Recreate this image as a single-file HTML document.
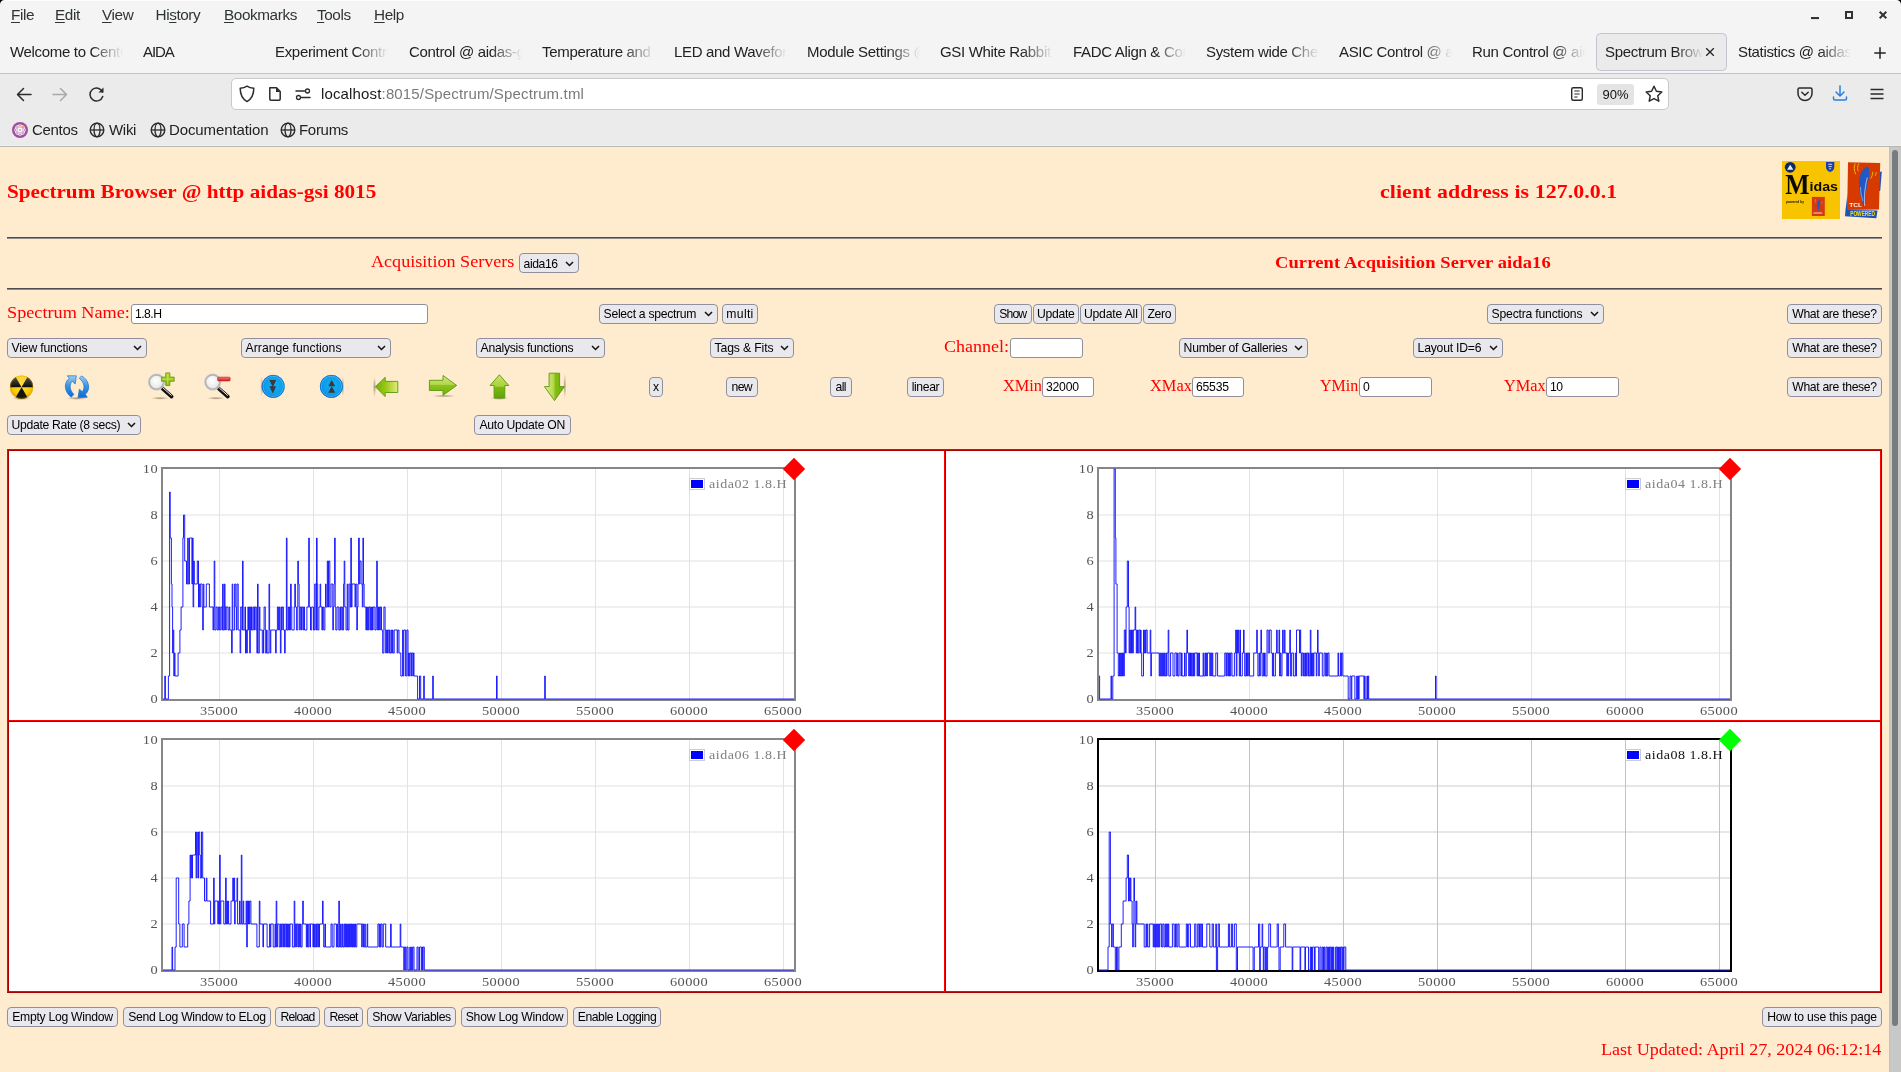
<!DOCTYPE html>
<html><head><meta charset="utf-8"><title>Spectrum Browser</title>
<style>
*{box-sizing:border-box;margin:0;padding:0}
html,body{width:1901px;height:1072px;overflow:hidden;background:#ffebcd;font-family:"Liberation Sans",sans-serif;}
.abs{position:absolute}
#chrome{position:absolute;left:0;top:0;width:1901px;height:146px;background:#f4f4f4;}
#navbar{position:absolute;left:0;top:74px;width:1901px;height:72px;background:#ebebeb;}
#tabsep{position:absolute;left:0;top:73px;width:1901px;height:1px;background:#c4c4c4;}
#chromeend{position:absolute;left:0;top:145px;width:1901px;height:2px;background:linear-gradient(#efefef 0,#efefef 50%,#b6b8b6 50%,#b6b8b6 100%);}
.menu{position:absolute;top:6px;font-size:15.3px;color:#2e3436;white-space:nowrap;line-height:18px;letter-spacing:-0.4px}
.menu u{text-decoration:underline;text-underline-offset:2px}
.tab{position:absolute;top:42px;width:113px;height:20px;font-size:15px;line-height:20px;color:#222;white-space:nowrap;overflow:hidden;letter-spacing:-0.32px;
 -webkit-mask-image:linear-gradient(to right,#000 72%,transparent 100%);mask-image:linear-gradient(to right,#000 72%,transparent 100%);}
#acttab{position:absolute;left:1596px;top:33px;width:130.5px;height:37.5px;background:#ebebeb;border:1px solid #c4c4ce;border-radius:4.5px;}
#urlbar{position:absolute;left:231px;top:78px;width:1438px;height:32px;background:#fff;border:1px solid #c9c9c9;border-radius:5px;}
.bm{position:absolute;top:121px;font-size:15px;line-height:18px;color:#222;white-space:nowrap;letter-spacing:-0.3px}
.ser{font-family:"Liberation Serif",serif;color:#ff0000;white-space:nowrap;position:absolute}
.btn{position:absolute;height:19.7px;background:#e9e9ed;border:1px solid #8f8f9d;border-radius:4px;font-size:12.2px;line-height:17.7px;padding-top:0.9px;color:#000;text-align:center;white-space:nowrap;overflow:hidden}
.sel{position:absolute;height:19.7px;background:#e9e9ed;border:1px solid #8f8f9d;border-radius:4px;font-size:12.2px;line-height:17.7px;color:#000;padding-left:3.6px;padding-top:1.3px;white-space:nowrap;overflow:hidden}
.sel svg{position:absolute;right:3.8px;top:6.3px}
.inp{position:absolute;height:19.7px;background:#fff;border:1px solid #8f8f9d;border-radius:3px;font-size:12.2px;line-height:17.7px;color:#000;padding-left:3px;padding-top:0.5px;white-space:nowrap;overflow:hidden}
.hr{position:absolute;left:7px;width:1875px;height:2px;background:linear-gradient(#4b4d53 0,#4b4d53 50%,#8c8c90 50%,#8c8c90 100%)}
.cell{position:absolute;background:#fff;border:2px solid #d40000}
.tick{position:absolute;font-family:"Liberation Serif",serif;font-size:12px;color:#545454;line-height:12px;white-space:nowrap}
.tx{transform:translateX(-50%)}
.ty{text-align:right;width:30px}
#all{position:absolute;left:0;top:0;width:1901px;height:1072px;will-change:transform}
</style></head><body><div id="all">
<div id="chrome"></div>
<div id="navbar"></div>
<div id="tabsep"></div>
<div id="chromeend"></div>
<!-- menu -->
<div class="menu" style="left:11px"><u>F</u>ile</div>
<div class="menu" style="left:55px"><u>E</u>dit</div>
<div class="menu" style="left:102px"><u>V</u>iew</div>
<div class="menu" style="left:155.5px">Hi<u>s</u>tory</div>
<div class="menu" style="left:224px"><u>B</u>ookmarks</div>
<div class="menu" style="left:317px"><u>T</u>ools</div>
<div class="menu" style="left:374px"><u>H</u>elp</div>
<!-- window controls -->
<svg class="abs" style="left:1800px;top:5px" width="90" height="22" viewBox="0 0 90 22">
 <rect x="11" y="12" width="8" height="2.100" fill="#2e3436"/>
 <rect x="46" y="7" width="6" height="6" fill="none" stroke="#2e3436" stroke-width="2"/>
 <path d="M79.700 6.700 L86.300 13.300 M86.300 6.700 L79.700 13.300" stroke="#2e3436" stroke-width="2" fill="none"/>
</svg>
<svg class="abs" style="left:0;top:0" width="1901" height="8" viewBox="0 0 1901 8">
 <rect x="0" y="0" width="1901" height="1" fill="#fcfcfc"/>
 <path d="M0 0 H4.500 A4.500 4.500 0 0 0 0 4.500 Z" fill="#000"/>
 <path d="M1901 0 H1896.500 A4.500 4.500 0 0 1 1901 4.500 Z" fill="#000"/>
</svg>
<!-- tabs -->
<div id="acttab"></div>
<div class="tab" style="left:10px">Welcome to CentOS</div>
<div class="tab" style="left:143px;letter-spacing:-1.1px">AIDA</div>
<div class="tab" style="left:275px">Experiment Control</div>
<div class="tab" style="left:409px">Control @ aidas-gsi</div>
<div class="tab" style="left:542px">Temperature and st</div>
<div class="tab" style="left:674px">LED and Waveform</div>
<div class="tab" style="left:807px">Module Settings @</div>
<div class="tab" style="left:940px">GSI White Rabbit C</div>
<div class="tab" style="left:1073px">FADC Align &amp; Contr</div>
<div class="tab" style="left:1206px">System wide Checks</div>
<div class="tab" style="left:1339px">ASIC Control @ aid</div>
<div class="tab" style="left:1472px">Run Control @ aida</div>
<div class="tab" style="left:1605px;width:98px">Spectrum Browser</div>
<div class="tab" style="left:1738px">Statistics @ aidas-g</div>
<svg class="abs" style="left:1704px;top:46px" width="12" height="12" viewBox="0 0 12 12"><path d="M2.2 2.2 L9.800 9.800 M9.800 2.200 L2.200 9.800" stroke="#222" stroke-width="1.3" fill="none"/></svg>
<svg class="abs" style="left:1872.300px;top:44.500px" width="16" height="16" viewBox="0 0 16 16"><path d="M8 2.300 V13.700 M2.300 8 H13.700" stroke="#222" stroke-width="1.5" fill="none"/></svg>
<!-- nav buttons -->
<svg class="abs" style="left:14px;top:84px" width="100" height="22" viewBox="0 0 100 22">
 <path d="M17 10.5 H4 M9.5 4.5 L3.5 10.5 L9.5 16.5" stroke="#2b2b2b" stroke-width="1.5" fill="none" stroke-linecap="round" stroke-linejoin="round"/>
 <path d="M39 10.5 H52 M46.500 4.500 L52.5 10.5 L46.5 16.5" stroke="#a9a9a9" stroke-width="1.5" fill="none" stroke-linecap="round" stroke-linejoin="round"/>
 <path d="M88.500 8 A6.500 6.500 0 1 0 88.700 12.500" stroke="#2b2b2b" stroke-width="1.500" fill="none" stroke-linecap="round"/>
 <path d="M89.500 3.500 V8.500 H84.500 Z" fill="#2b2b2b"/>
</svg>
<!-- url bar -->
<div id="urlbar"></div>
<svg class="abs" style="left:238px;top:84px" width="80" height="20" viewBox="0 0 80 20">
 <path d="M9 2.200 C11 3.600 13.500 4.200 15.800 4.300 C15.800 10 14 14.800 9 17.600 C4 14.800 2.200 10 2.200 4.300 C4.500 4.200 7 3.600 9 2.200 Z" stroke="#2b2b2b" stroke-width="1.500" fill="none" stroke-linejoin="round"/>
 <path d="M31.800 3.800 H38.500 L42.200 7.500 V15 Q42.200 16.200 41 16.200 H33 Q31.800 16.200 31.800 15 Z" stroke="#2b2b2b" stroke-width="1.500" fill="none" stroke-linejoin="round"/>
 <path d="M38 3.800 V8 H42.200 Z" fill="#2b2b2b"/>
 <path d="M58 7 H66.500 M63.500 13.500 H72" stroke="#2b2b2b" stroke-width="1.500" fill="none" stroke-linecap="round"/>
 <circle cx="69.500" cy="7" r="2" stroke="#2b2b2b" stroke-width="1.300" fill="none"/>
 <circle cx="60.500" cy="13.500" r="2" stroke="#2b2b2b" stroke-width="1.300" fill="none"/>
</svg>
<div class="abs" style="left:321px;top:84px;font-size:15px;line-height:20px;color:#1a1a1a;white-space:nowrap;letter-spacing:0.15px">localhost<span style="color:#7a7a7a">:8015/Spectrum/Spectrum.tml</span></div>
<!-- reader, zoom, star -->
<svg class="abs" style="left:1569px;top:86px" width="16" height="16" viewBox="0 0 16 16">
 <rect x="2.700" y="1.700" width="10.600" height="12.600" rx="1.500" stroke="#2b2b2b" stroke-width="1.400" fill="none"/>
 <path d="M5.300 5 H10.700 M5.300 8 H10.700 M5.300 11 H8.500" stroke="#2b2b2b" stroke-width="1.200" fill="none"/>
</svg>
<div class="abs" style="left:1597px;top:84px;width:37px;height:21px;background:#e4e4e4;border-radius:3px;font-size:13px;line-height:21px;text-align:center;color:#111">90%</div>
<svg class="abs" style="left:1644px;top:84px" width="20" height="20" viewBox="0 0 20 20">
 <path d="M10 2.300 L12.400 7.300 L17.800 8 L13.800 11.800 L14.800 17.200 L10 14.600 L5.200 17.200 L6.200 11.800 L2.200 8 L7.600 7.300 Z" stroke="#2b2b2b" stroke-width="1.500" fill="none" stroke-linejoin="round"/>
</svg>
<!-- pocket, download, hamburger -->
<svg class="abs" style="left:1796px;top:85px" width="18" height="18" viewBox="0 0 18 18">
 <path d="M3.500 3 H14.500 Q16 3 16 4.500 V8.500 A7 7 0 0 1 2 8.500 V4.500 Q2 3 3.500 3 Z" stroke="#2b2b2b" stroke-width="1.500" fill="none"/>
 <path d="M5.800 7.300 L9 10.300 L12.200 7.300" stroke="#2b2b2b" stroke-width="1.500" fill="none" stroke-linecap="round" stroke-linejoin="round"/>
</svg>
<svg class="abs" style="left:1831px;top:84px" width="18" height="20" viewBox="0 0 18 20">
 <path d="M9 2 V11.500 M5 8 L9 12 L13 8" stroke="#2a7fe0" stroke-width="1.500" fill="none" stroke-linecap="round" stroke-linejoin="round"/>
 <path d="M2.500 13 V14.500 Q2.500 16 4 16 H14 Q15.500 16 15.500 14.500 V13" stroke="#2a7fe0" stroke-width="1.500" fill="none" stroke-linecap="round"/>
</svg>
<svg class="abs" style="left:1869px;top:86px" width="16" height="16" viewBox="0 0 16 16">
 <path d="M1.500 3.500 H14.500 M1.500 8 H14.500 M1.500 12.500 H14.500" stroke="#2b2b2b" stroke-width="1.500" fill="none"/>
</svg>
<!-- bookmarks -->
<svg class="abs" style="left:11px;top:121px" width="18" height="18" viewBox="0 0 18 18">
 <circle cx="9" cy="9" r="8" fill="#a14f9d"/>
 <g stroke="#fff" stroke-width="0.900" fill="none">
  <circle cx="9" cy="5.800" r="2.100"/><circle cx="9" cy="12.200" r="2.100"/><circle cx="5.800" cy="9" r="2.100"/><circle cx="12.200" cy="9" r="2.100"/>
  <circle cx="6.700" cy="6.700" r="2.100"/><circle cx="11.300" cy="6.700" r="2.100"/><circle cx="6.700" cy="11.300" r="2.100"/><circle cx="11.300" cy="11.300" r="2.100"/>
 </g>
 <circle cx="11.800" cy="6.200" r="1.100" fill="#f6a623"/>
</svg>
<div class="bm" style="left:32px">Centos</div>
<div class="bm" style="left:109px">Wiki</div>
<div class="bm" style="left:169px;letter-spacing:-0.1px">Documentation</div>
<div class="bm" style="left:299px">Forums</div>
<svg width="0" height="0" style="position:absolute"><defs>
 <g id="globe"><circle cx="8" cy="8" r="6.800" stroke="#2b2b2b" stroke-width="1.400" fill="none"/><ellipse cx="8" cy="8" rx="3" ry="6.800" stroke="#2b2b2b" stroke-width="1.300" fill="none"/><path d="M1.200 8 H14.800" stroke="#2b2b2b" stroke-width="1.300"/></g>
</defs></svg>
<svg class="abs" style="left:89px;top:122px" width="16" height="16"><use href="#globe"/></svg>
<svg class="abs" style="left:149.500px;top:122px" width="16" height="16"><use href="#globe"/></svg>
<svg class="abs" style="left:279.500px;top:122px" width="16" height="16"><use href="#globe"/></svg>
<div class="ser" style="left:6.7px;top:179.42px;font-size:19.5px;line-height:25px;letter-spacing:0.000px;transform-origin:0 50%;transform:scaleX(1.0871);font-weight:bold;">Spectrum Browser @ http aidas-gsi 8015</div>
<div class="ser" style="left:1379.7px;top:179.22px;font-size:19.5px;line-height:25px;letter-spacing:0.079px;transform-origin:0 50%;transform:scaleX(1.1200);font-weight:bold;">client address is 127.0.0.1</div>
<div class="hr" style="top:237px"></div>
<div class="ser" style="left:371.1px;top:250.66px;font-size:17px;line-height:22px;letter-spacing:0.000px;transform-origin:0 50%;transform:scaleX(1.0657);">Acquisition Servers</div>
<div class="sel" style="left:519px;top:253.3px;width:60px;letter-spacing:-0.427px;">aida16<svg width="9" height="6" viewBox="0 0 9 6"><path d="M1 1 L4.5 4.5 L8 1" stroke="#111" stroke-width="1.5" fill="none"/></svg></div>
<div class="ser" style="left:1274.7px;top:251.93px;font-size:16.5px;line-height:21px;letter-spacing:0.106px;transform-origin:0 50%;transform:scaleX(1.1200);font-weight:bold;">Current Acquisition Server aida16</div>
<div class="hr" style="top:288px"></div>
<div class="ser" style="left:6.6px;top:301.76px;font-size:17px;line-height:22px;letter-spacing:0.000px;transform-origin:0 50%;transform:scaleX(1.0713);">Spectrum Name:</div>
<div class="inp" style="left:131px;top:304px;width:297px;letter-spacing:-0.540px;">1.8.H</div>
<div class="sel" style="left:599px;top:304px;width:119px;letter-spacing:-0.290px;">Select a spectrum<svg width="9" height="6" viewBox="0 0 9 6"><path d="M1 1 L4.5 4.5 L8 1" stroke="#111" stroke-width="1.5" fill="none"/></svg></div>
<div class="btn" style="left:722px;top:304px;width:36px;letter-spacing:0.310px;">multi</div>
<div class="btn" style="left:994px;top:304px;width:37.5px;letter-spacing:-0.839px;">Show</div>
<div class="btn" style="left:1032.5px;top:304px;width:46.5px;letter-spacing:-0.268px;">Update</div>
<div class="btn" style="left:1079.6px;top:304px;width:62.40000000000009px;letter-spacing:-0.179px;">Update All</div>
<div class="btn" style="left:1142.7px;top:304px;width:33.299999999999955px;letter-spacing:-0.362px;">Zero</div>
<div class="sel" style="left:1487px;top:304px;width:117px;letter-spacing:-0.204px;">Spectra functions<svg width="9" height="6" viewBox="0 0 9 6"><path d="M1 1 L4.5 4.5 L8 1" stroke="#111" stroke-width="1.5" fill="none"/></svg></div>
<div class="btn" style="left:1787px;top:304px;width:95px;letter-spacing:-0.323px;">What are these?</div>
<div class="sel" style="left:7px;top:338px;width:140px;letter-spacing:-0.188px;">View functions<svg width="9" height="6" viewBox="0 0 9 6"><path d="M1 1 L4.5 4.5 L8 1" stroke="#111" stroke-width="1.5" fill="none"/></svg></div>
<div class="sel" style="left:241px;top:338px;width:149.5px;letter-spacing:0.024px;">Arrange functions<svg width="9" height="6" viewBox="0 0 9 6"><path d="M1 1 L4.5 4.5 L8 1" stroke="#111" stroke-width="1.5" fill="none"/></svg></div>
<div class="sel" style="left:476px;top:338px;width:129px;letter-spacing:-0.273px;">Analysis functions<svg width="9" height="6" viewBox="0 0 9 6"><path d="M1 1 L4.5 4.5 L8 1" stroke="#111" stroke-width="1.5" fill="none"/></svg></div>
<div class="sel" style="left:710px;top:338px;width:84px;letter-spacing:-0.134px;">Tags &amp; Fits<svg width="9" height="6" viewBox="0 0 9 6"><path d="M1 1 L4.5 4.5 L8 1" stroke="#111" stroke-width="1.5" fill="none"/></svg></div>
<div class="ser" style="left:943.9px;top:335.76px;font-size:17px;line-height:22px;letter-spacing:0.000px;transform-origin:0 50%;transform:scaleX(1.0607);">Channel:</div>
<div class="inp" style="left:1010px;top:338px;width:73px;"></div>
<div class="sel" style="left:1179px;top:338px;width:129px;letter-spacing:-0.249px;">Number of Galleries<svg width="9" height="6" viewBox="0 0 9 6"><path d="M1 1 L4.5 4.5 L8 1" stroke="#111" stroke-width="1.5" fill="none"/></svg></div>
<div class="sel" style="left:1413px;top:338px;width:90px;letter-spacing:-0.213px;">Layout ID=6<svg width="9" height="6" viewBox="0 0 9 6"><path d="M1 1 L4.5 4.5 L8 1" stroke="#111" stroke-width="1.5" fill="none"/></svg></div>
<div class="btn" style="left:1787px;top:338px;width:95px;letter-spacing:-0.323px;">What are these?</div>
<div class="btn" style="left:649px;top:377px;width:14px;">x</div>
<div class="btn" style="left:726px;top:377px;width:31.5px;letter-spacing:-0.690px;">new</div>
<div class="btn" style="left:830px;top:377px;width:21.5px;letter-spacing:-0.603px;">all</div>
<div class="btn" style="left:907px;top:377px;width:37px;letter-spacing:-0.368px;">linear</div>
<div class="ser" style="left:1002.6px;top:374.56px;font-size:17px;line-height:22px;letter-spacing:0.000px;transform-origin:0 50%;transform:scaleX(0.9602);">XMin</div>
<div class="inp" style="left:1042px;top:377px;width:52px;letter-spacing:-0.231px;">32000</div>
<div class="ser" style="left:1149.9px;top:374.56px;font-size:17px;line-height:22px;letter-spacing:0.000px;transform-origin:0 50%;transform:scaleX(0.9646);">XMax</div>
<div class="inp" style="left:1192px;top:377px;width:52px;letter-spacing:-0.231px;">65535</div>
<div class="ser" style="left:1320.1px;top:374.56px;font-size:17px;line-height:22px;letter-spacing:0.000px;transform-origin:0 50%;transform:scaleX(0.9381);">YMin</div>
<div class="inp" style="left:1359px;top:377px;width:73px;">0</div>
<div class="ser" style="left:1504.1px;top:374.56px;font-size:17px;line-height:22px;letter-spacing:0.000px;transform-origin:0 50%;transform:scaleX(0.9577);">YMax</div>
<div class="inp" style="left:1546px;top:377px;width:73px;letter-spacing:-0.570px;">10</div>
<div class="btn" style="left:1787px;top:377px;width:95px;letter-spacing:-0.323px;">What are these?</div>
<div class="sel" style="left:7px;top:415px;width:134px;letter-spacing:-0.330px;">Update Rate (8 secs)<svg width="9" height="6" viewBox="0 0 9 6"><path d="M1 1 L4.5 4.5 L8 1" stroke="#111" stroke-width="1.5" fill="none"/></svg></div>
<div class="btn" style="left:474px;top:415px;width:96.5px;letter-spacing:-0.271px;">Auto Update ON</div>
<div class="btn" style="left:7px;top:1007px;width:111px;letter-spacing:-0.273px;">Empty Log Window</div>
<div class="btn" style="left:123px;top:1007px;width:148px;letter-spacing:-0.294px;">Send Log Window to ELog</div>
<div class="btn" style="left:275px;top:1007px;width:45px;letter-spacing:-0.732px;">Reload</div>
<div class="btn" style="left:324px;top:1007px;width:39px;letter-spacing:-0.718px;">Reset</div>
<div class="btn" style="left:367px;top:1007px;width:89px;letter-spacing:-0.374px;">Show Variables</div>
<div class="btn" style="left:461px;top:1007px;width:107px;letter-spacing:-0.217px;">Show Log Window</div>
<div class="btn" style="left:573px;top:1007px;width:88px;letter-spacing:-0.446px;">Enable Logging</div>
<div class="btn" style="left:1762px;top:1007px;width:120px;letter-spacing:-0.207px;">How to use this page</div>
<div class="ser" style="left:1601.1px;top:1039.36px;font-size:17px;line-height:22px;letter-spacing:0.000px;transform-origin:0 50%;transform:scaleX(1.0639);">Last Updated: April 27, 2024 06:12:14</div>
<div class="abs" style="left:1889px;top:147px;width:12px;height:925px;background:#c7c9c9;border-left:1px solid #bfc1c3"></div>
<div class="abs" style="left:1892px;top:150px;width:6px;height:876px;background:#787c7e;border-radius:3px"></div>
<div class="abs" style="left:7px;top:449px;width:1875px;height:544px;background:#fff;border:1px solid;border-color:#ff0000 #aa0000 #aa0000 #ff0000"></div>
<div class="abs" style="left:8px;top:450px;width:937px;height:271px;border:1px solid;border-color:#aa0000 #ff0000 #ff0000 #aa0000"></div>
<div class="abs" style="left:945px;top:450px;width:936px;height:271px;border:1px solid;border-color:#aa0000 #ff0000 #ff0000 #aa0000"></div>
<div class="abs" style="left:8px;top:721px;width:937px;height:271px;border:1px solid;border-color:#aa0000 #ff0000 #ff0000 #aa0000"></div>
<div class="abs" style="left:945px;top:721px;width:936px;height:271px;border:1px solid;border-color:#aa0000 #ff0000 #ff0000 #aa0000"></div>
<svg class="abs" style="left:0;top:0" width="1901" height="1072" viewBox="0 0 1901 1072">
<g transform="translate(0,0)">
<path d="M163.0 653H794.0M163.0 607H794.0M163.0 561H794.0M163.0 515H794.0" stroke="#f0f0f0" stroke-width="2" fill="none"/>
<path d="M219.5 469.0V699.0M313.5 469.0V699.0M407.5 469.0V699.0M501.5 469.0V699.0M595.5 469.0V699.0M689.5 469.0V699.0M783.5 469.0V699.0" stroke="#e3e3e3" stroke-width="1" fill="none"/>
<rect x="162.0" y="468.0" width="633.0" height="232.0" fill="none" stroke="#868686" stroke-width="2"/>
<path d="M163.0 699.0H164.8V676.0H165.4V699.0H168.4V676.0H169.6V492.0H170.2V538.0H171.4V584.0H172.0V607.0H172.6V653.0H173.2V630.0H173.8V676.0H174.4V653.0H175.0V676.0H178.1V653.0H179.9V630.0H181.1V607.0H182.9V538.0H183.5V515.0H184.7V561.0H186.5V584.0H187.7V538.0H188.3V584.0H189.5V538.0H191.9V584.0H192.5V538.0H193.1V607.0H193.7V561.0H194.3V584.0H197.3V561.0H198.5V607.0H199.1V584.0H199.7V607.0H200.3V584.0H202.1V607.0H202.7V630.0H203.3V584.0H203.9V607.0H206.3V584.0H209.4V607.0H213.0V630.0H213.6V607.0H214.2V561.0H214.8V630.0H216.0V607.0H217.2V630.0H218.4V607.0H219.6V630.0H220.8V607.0H222.0V630.0H222.6V584.0H223.2V630.0H224.4V584.0H225.0V607.0H225.6V630.0H226.2V607.0H228.0V630.0H229.2V607.0H229.8V630.0H231.6V653.0H232.2V584.0H232.8V630.0H234.6V584.0H235.8V607.0H236.4V630.0H237.0V584.0H238.2V630.0H240.1V653.0H240.7V607.0H241.9V630.0H242.5V561.0H243.1V630.0H244.9V607.0H245.5V653.0H246.1V630.0H246.7V653.0H247.3V630.0H247.9V607.0H248.5V630.0H249.1V607.0H249.7V653.0H250.3V607.0H250.9V630.0H251.5V607.0H252.1V630.0H253.3V607.0H254.5V630.0H255.1V607.0H256.3V630.0H256.9V653.0H257.5V584.0H258.1V653.0H259.3V607.0H259.9V630.0H262.3V653.0H263.5V630.0H264.1V607.0H265.3V653.0H266.5V630.0H267.1V653.0H269.0V584.0H269.6V630.0H270.2V653.0H270.8V630.0H275.6V653.0H276.2V630.0H277.4V607.0H278.6V630.0H279.2V607.0H279.8V630.0H280.4V653.0H281.0V607.0H281.6V630.0H282.2V607.0H283.4V630.0H284.6V653.0H285.2V630.0H286.4V538.0H287.0V630.0H288.2V607.0H288.8V630.0H289.4V607.0H290.0V630.0H290.6V584.0H291.2V607.0H291.8V630.0H294.2V607.0H294.8V584.0H295.4V607.0H296.6V630.0H297.8V561.0H298.4V584.0H299.1V607.0H299.7V630.0H300.3V607.0H301.5V630.0H302.1V607.0H303.3V630.0H303.9V607.0H304.5V630.0H306.9V607.0H308.7V538.0H309.3V607.0H310.5V630.0H311.7V607.0H313.5V630.0H314.7V584.0H315.9V630.0H316.5V538.0H317.1V584.0H317.7V630.0H318.9V607.0H320.1V584.0H320.7V607.0H321.9V630.0H322.5V607.0H323.7V630.0H324.9V607.0H325.5V584.0H326.1V607.0H327.3V561.0H327.9V607.0H328.5V561.0H329.8V607.0H331.0V584.0H332.8V630.0H333.4V607.0H334.0V584.0H334.6V538.0H335.2V607.0H335.8V630.0H337.0V607.0H338.8V630.0H340.0V607.0H340.6V630.0H341.2V607.0H342.4V630.0H343.6V584.0H344.2V561.0H344.8V607.0H346.0V630.0H347.2V584.0H347.8V630.0H349.0V584.0H350.2V607.0H350.8V538.0H351.4V607.0H352.0V584.0H355.0V607.0H355.6V584.0H356.8V630.0H357.4V607.0H358.0V584.0H358.6V538.0H359.3V584.0H359.9V561.0H361.1V584.0H362.3V607.0H362.9V538.0H363.5V584.0H364.1V607.0H365.9V630.0H366.5V607.0H367.1V630.0H367.7V607.0H368.3V630.0H368.9V607.0H370.1V630.0H370.7V607.0H371.3V630.0H371.9V607.0H372.5V630.0H373.1V607.0H374.9V630.0H376.1V607.0H376.7V561.0H377.3V630.0H377.9V607.0H378.5V630.0H379.1V607.0H379.7V630.0H380.3V607.0H381.5V630.0H382.7V653.0H383.9V607.0H385.1V630.0H385.7V653.0H386.3V630.0H386.9V653.0H387.5V630.0H388.8V653.0H389.4V630.0H390.0V653.0H391.2V630.0H391.8V653.0H392.4V630.0H393.0V653.0H394.2V630.0H397.2V653.0H397.8V630.0H399.0V653.0H400.8V676.0H402.6V630.0H403.2V676.0H403.8V630.0H405.6V676.0H406.8V630.0H408.0V676.0H408.6V653.0H409.2V676.0H409.8V653.0H411.0V676.0H411.6V653.0H412.8V676.0H413.4V653.0H414.0V676.0H417.6V699.0H419.5V676.0H420.7V699.0H423.7V676.0H424.3V699.0H432.7V676.0H433.3V699.0H496.5V676.0H497.1V699.0H544.7V676.0H545.3V699.0H794.0" stroke="#1a1aff" stroke-width="0.98" fill="none" stroke-linejoin="miter" shape-rendering="auto"/>
<path d="M794.0 457.8 L805.2 469.0 L794.0 480.2 L782.8 469.0 Z" fill="#ff0000"/>
<rect x="689.5" y="478.500" width="15" height="11" fill="#fff" stroke="#ccc" stroke-width="1"/>
<rect x="691" y="480" width="12" height="8" fill="#0000ff"/>
</g>
<g transform="translate(936,0)">
<path d="M163.0 653H794.0M163.0 607H794.0M163.0 561H794.0M163.0 515H794.0" stroke="#f0f0f0" stroke-width="2" fill="none"/>
<path d="M219.5 469.0V699.0M313.5 469.0V699.0M407.5 469.0V699.0M501.5 469.0V699.0M595.5 469.0V699.0M689.5 469.0V699.0M783.5 469.0V699.0" stroke="#e3e3e3" stroke-width="1" fill="none"/>
<rect x="162.0" y="468.0" width="633.0" height="232.0" fill="none" stroke="#868686" stroke-width="2"/>
<path d="M163.0 676.0H163.6V699.0H175.0V676.0H175.6V699.0H176.8V676.0H178.1V469.0H179.3V538.0H179.9V584.0H181.1V653.0H182.3V676.0H183.5V653.0H184.1V676.0H184.7V653.0H185.3V676.0H185.9V653.0H186.5V676.0H187.1V653.0H187.7V676.0H188.3V630.0H189.5V653.0H190.1V607.0H191.3V561.0H192.5V607.0H193.1V653.0H193.7V630.0H194.3V653.0H194.9V630.0H195.5V653.0H196.1V630.0H196.7V653.0H197.3V630.0H199.1V607.0H199.7V630.0H200.3V653.0H200.9V630.0H201.5V653.0H202.7V630.0H203.9V653.0H204.5V630.0H205.1V653.0H205.7V676.0H207.5V630.0H208.2V653.0H208.8V630.0H209.4V653.0H210.0V630.0H211.2V653.0H214.2V630.0H214.8V676.0H215.4V653.0H223.2V676.0H223.8V653.0H224.4V676.0H225.6V653.0H226.2V676.0H226.8V653.0H227.4V676.0H228.0V653.0H228.6V676.0H229.8V653.0H230.4V676.0H231.0V653.0H232.2V630.0H232.8V676.0H234.6V653.0H237.0V676.0H238.9V653.0H240.7V676.0H241.3V653.0H241.9V676.0H243.1V653.0H244.9V676.0H245.5V653.0H246.1V676.0H248.5V653.0H249.1V676.0H250.3V653.0H250.9V630.0H251.5V653.0H252.7V676.0H253.3V653.0H253.9V676.0H254.5V653.0H255.1V676.0H255.7V653.0H256.3V676.0H257.5V653.0H258.1V676.0H258.7V653.0H261.1V676.0H261.7V653.0H262.3V676.0H262.9V653.0H263.5V676.0H267.1V653.0H267.7V676.0H269.0V653.0H269.6V676.0H270.2V653.0H270.8V676.0H271.4V653.0H273.8V676.0H274.4V653.0H275.6V676.0H276.2V653.0H276.8V676.0H279.8V653.0H281.6V676.0H288.8V653.0H290.0V676.0H290.6V653.0H291.8V676.0H292.4V653.0H293.0V676.0H293.6V653.0H294.2V676.0H294.8V653.0H296.0V676.0H298.4V653.0H299.7V630.0H300.3V676.0H300.9V630.0H301.5V653.0H302.1V630.0H302.7V653.0H303.3V676.0H303.9V630.0H304.5V676.0H306.3V653.0H307.5V630.0H308.1V653.0H308.7V676.0H309.9V653.0H310.5V676.0H311.1V653.0H311.7V676.0H312.3V653.0H313.5V676.0H317.7V653.0H320.7V630.0H321.3V653.0H321.9V676.0H323.1V653.0H323.7V676.0H324.3V653.0H324.9V630.0H325.5V653.0H326.1V676.0H327.3V653.0H327.9V676.0H328.5V653.0H329.2V676.0H331.0V630.0H332.2V653.0H333.4V630.0H335.2V653.0H336.4V676.0H337.0V653.0H337.6V676.0H339.4V653.0H340.6V630.0H341.2V653.0H343.0V630.0H343.6V676.0H344.2V653.0H344.8V676.0H346.0V653.0H346.6V630.0H347.2V653.0H348.4V630.0H349.0V653.0H350.8V676.0H351.4V653.0H352.0V676.0H352.6V653.0H353.8V630.0H354.4V676.0H355.6V653.0H357.4V676.0H359.3V653.0H359.9V676.0H360.5V630.0H363.5V653.0H364.1V630.0H364.7V653.0H365.3V676.0H365.9V653.0H367.1V676.0H367.7V653.0H368.3V676.0H369.5V653.0H370.1V676.0H370.7V653.0H371.9V676.0H372.5V653.0H373.1V676.0H374.3V630.0H374.9V676.0H375.5V653.0H376.1V676.0H376.7V653.0H377.3V676.0H377.9V653.0H380.3V676.0H380.9V653.0H381.5V630.0H382.1V653.0H382.7V676.0H383.3V653.0H386.3V676.0H388.1V653.0H389.4V676.0H390.6V653.0H391.2V676.0H391.8V653.0H393.0V676.0H402.0V653.0H402.6V676.0H404.4V653.0H405.0V676.0H405.6V653.0H406.8V676.0H412.2V699.0H414.0V676.0H415.2V699.0H415.8V676.0H418.9V699.0H420.7V676.0H421.3V699.0H421.9V676.0H422.5V699.0H423.1V676.0H427.9V699.0H428.5V676.0H429.1V699.0H430.9V676.0H431.5V699.0H432.1V676.0H432.7V699.0H499.5V676.0H500.1V699.0H794.0" stroke="#1a1aff" stroke-width="0.98" fill="none" stroke-linejoin="miter" shape-rendering="auto"/>
<path d="M794.0 457.8 L805.2 469.0 L794.0 480.2 L782.8 469.0 Z" fill="#ff0000"/>
<rect x="689.5" y="478.500" width="15" height="11" fill="#fff" stroke="#ccc" stroke-width="1"/>
<rect x="691" y="480" width="12" height="8" fill="#0000ff"/>
</g>
<g transform="translate(0,271)">
<path d="M163.0 653H794.0M163.0 607H794.0M163.0 561H794.0M163.0 515H794.0" stroke="#f0f0f0" stroke-width="2" fill="none"/>
<path d="M219.5 469.0V699.0M313.5 469.0V699.0M407.5 469.0V699.0M501.5 469.0V699.0M595.5 469.0V699.0M689.5 469.0V699.0M783.5 469.0V699.0" stroke="#e3e3e3" stroke-width="1" fill="none"/>
<rect x="162.0" y="468.0" width="633.0" height="232.0" fill="none" stroke="#868686" stroke-width="2"/>
<path d="M163.0 699.0H172.0V676.0H172.6V699.0H175.0V676.0H176.2V607.0H178.7V653.0H179.9V676.0H182.3V653.0H184.1V676.0H187.7V653.0H188.9V630.0H190.1V584.0H190.7V607.0H191.3V584.0H191.9V607.0H192.5V584.0H195.5V561.0H196.1V607.0H196.7V561.0H197.3V584.0H197.9V607.0H198.5V561.0H199.7V584.0H200.3V607.0H201.5V561.0H202.7V607.0H204.5V630.0H206.3V607.0H206.9V630.0H210.6V653.0H213.6V607.0H214.2V653.0H214.8V630.0H217.8V653.0H218.4V630.0H219.0V653.0H219.6V584.0H220.2V653.0H220.8V630.0H223.8V653.0H225.6V607.0H226.2V653.0H226.8V630.0H227.4V653.0H228.0V630.0H228.6V653.0H231.0V630.0H232.8V607.0H233.4V630.0H234.0V607.0H234.6V653.0H235.2V630.0H237.0V607.0H237.6V653.0H239.5V630.0H240.1V653.0H241.3V584.0H241.9V653.0H243.1V630.0H243.7V653.0H246.1V630.0H246.7V676.0H247.3V630.0H247.9V653.0H248.5V630.0H249.1V653.0H249.7V630.0H250.9V653.0H256.9V676.0H259.3V630.0H259.9V653.0H262.9V676.0H263.5V653.0H267.1V676.0H269.6V653.0H270.2V676.0H270.8V653.0H273.2V676.0H275.0V653.0H275.6V676.0H276.2V630.0H276.8V676.0H277.4V653.0H279.2V676.0H280.4V653.0H281.0V676.0H281.6V653.0H282.8V676.0H283.4V653.0H284.0V676.0H284.6V653.0H285.8V676.0H286.4V653.0H287.0V676.0H287.6V653.0H288.2V676.0H288.8V653.0H289.4V676.0H290.0V653.0H292.4V676.0H294.2V630.0H294.8V676.0H295.4V653.0H296.6V676.0H297.2V653.0H298.4V676.0H299.1V653.0H299.7V676.0H300.3V653.0H300.9V676.0H302.1V653.0H302.7V630.0H303.3V653.0H306.3V676.0H306.9V653.0H307.5V676.0H308.7V653.0H309.9V676.0H310.5V653.0H312.9V676.0H313.5V653.0H314.1V676.0H314.7V653.0H315.3V676.0H316.5V653.0H317.7V676.0H318.3V653.0H318.9V676.0H319.5V653.0H322.5V630.0H323.1V653.0H323.7V676.0H324.9V653.0H325.5V676.0H331.0V653.0H332.2V676.0H334.0V653.0H336.4V676.0H337.0V653.0H337.6V676.0H338.8V630.0H339.4V676.0H340.6V653.0H341.2V676.0H342.4V653.0H343.0V676.0H344.2V653.0H344.8V676.0H345.4V653.0H346.0V676.0H346.6V653.0H347.2V676.0H347.8V653.0H348.4V676.0H349.0V653.0H349.6V676.0H350.2V653.0H350.8V676.0H351.4V653.0H352.0V676.0H352.6V653.0H353.2V676.0H353.8V653.0H354.4V676.0H355.0V653.0H355.6V676.0H356.8V653.0H361.7V676.0H362.3V653.0H363.5V676.0H364.7V653.0H365.3V676.0H367.1V653.0H367.7V676.0H377.9V653.0H379.1V676.0H379.7V653.0H380.3V676.0H380.9V653.0H382.1V676.0H383.3V653.0H385.7V676.0H390.6V653.0H391.2V676.0H400.2V653.0H400.8V676.0H403.8V699.0H404.4V676.0H405.6V699.0H406.8V676.0H408.0V699.0H409.8V676.0H410.4V699.0H411.6V676.0H412.2V699.0H412.8V676.0H414.0V699.0H417.0V676.0H418.2V699.0H419.5V676.0H421.3V699.0H421.9V676.0H422.5V699.0H423.1V676.0H424.3V699.0H794.0" stroke="#1a1aff" stroke-width="0.98" fill="none" stroke-linejoin="miter" shape-rendering="auto"/>
<path d="M794.0 457.8 L805.2 469.0 L794.0 480.2 L782.8 469.0 Z" fill="#ff0000"/>
<rect x="689.5" y="478.500" width="15" height="11" fill="#fff" stroke="#ccc" stroke-width="1"/>
<rect x="691" y="480" width="12" height="8" fill="#0000ff"/>
</g>
<g transform="translate(936,271)">
<path d="M163.0 653H794.0M163.0 607H794.0M163.0 561H794.0M163.0 515H794.0" stroke="#e6e6e6" stroke-width="2" fill="none"/>
<path d="M219.5 469.0V699.0M313.5 469.0V699.0M407.5 469.0V699.0M501.5 469.0V699.0M595.5 469.0V699.0M689.5 469.0V699.0M783.5 469.0V699.0" stroke="#c3c3c3" stroke-width="1" fill="none"/>
<rect x="162.0" y="468.0" width="633.0" height="232.0" fill="none" stroke="#000" stroke-width="2"/>
<path d="M163.0 699.0H172.0V676.0H173.2V561.0H174.4V653.0H175.6V676.0H176.2V653.0H177.4V676.0H179.3V699.0H180.5V676.0H181.7V699.0H182.9V676.0H185.3V653.0H187.1V630.0H190.1V607.0H191.3V584.0H192.5V630.0H193.1V607.0H193.7V630.0H194.3V607.0H194.9V630.0H196.1V653.0H196.7V676.0H197.3V653.0H197.9V607.0H198.5V630.0H199.1V676.0H199.7V653.0H200.3V630.0H200.9V653.0H208.2V676.0H210.0V653.0H210.6V676.0H211.2V653.0H211.8V676.0H213.6V653.0H217.2V676.0H217.8V653.0H218.4V676.0H219.6V653.0H220.2V676.0H220.8V653.0H221.4V676.0H222.6V653.0H223.2V676.0H223.8V653.0H225.6V676.0H226.8V653.0H228.0V676.0H229.2V653.0H229.8V676.0H230.4V653.0H231.6V676.0H232.2V653.0H232.8V676.0H236.4V653.0H238.2V676.0H239.5V653.0H240.7V676.0H241.9V653.0H243.1V676.0H250.3V653.0H251.5V676.0H252.7V653.0H254.5V676.0H258.7V653.0H259.9V676.0H261.7V653.0H262.9V676.0H263.5V653.0H264.7V676.0H265.3V653.0H266.5V676.0H270.8V653.0H273.8V676.0H276.2V653.0H277.4V676.0H279.8V653.0H280.4V699.0H281.6V676.0H282.2V653.0H283.4V676.0H292.4V653.0H293.6V676.0H295.4V653.0H296.6V676.0H298.4V653.0H300.3V699.0H301.5V676.0H317.1V699.0H318.3V676.0H322.5V653.0H323.7V699.0H324.3V676.0H326.1V653.0H326.7V676.0H327.3V699.0H327.9V676.0H329.2V699.0H329.8V676.0H330.4V699.0H331.6V676.0H332.8V653.0H334.6V676.0H341.2V653.0H342.4V676.0H343.0V699.0H344.2V676.0H347.8V653.0H349.6V676.0H356.2V699.0H356.8V676.0H364.1V699.0H364.7V676.0H368.9V699.0H369.5V676.0H372.5V699.0H374.3V676.0H374.9V699.0H375.5V676.0H376.1V699.0H376.7V676.0H378.5V699.0H379.1V676.0H382.7V699.0H383.9V676.0H385.1V699.0H386.3V676.0H387.5V699.0H388.1V676.0H388.8V699.0H390.0V676.0H391.2V699.0H391.8V676.0H392.4V699.0H393.0V676.0H393.6V699.0H394.2V676.0H395.4V699.0H396.0V676.0H396.6V699.0H397.2V676.0H397.8V699.0H399.6V676.0H400.8V699.0H401.4V676.0H402.0V699.0H402.6V676.0H403.2V699.0H403.8V676.0H404.4V699.0H405.0V676.0H406.2V699.0H406.8V676.0H407.4V699.0H408.0V676.0H409.8V699.0H794.0" stroke="#1a1aff" stroke-width="0.98" fill="none" stroke-linejoin="miter" shape-rendering="auto"/>
<path d="M794.0 457.8 L805.2 469.0 L794.0 480.2 L782.8 469.0 Z" fill="#00ff00"/>
<rect x="689.5" y="478.500" width="15" height="11" fill="#fff" stroke="#ccc" stroke-width="1"/>
<rect x="691" y="480" width="12" height="8" fill="#0000ff"/>
</g>
</svg>
<div class="tick" style="left:218.9px;top:705px;letter-spacing:0.35px;transform:translateX(-50%) scaleX(1.2)">35000</div>
<div class="tick" style="left:313.0px;top:705px;letter-spacing:0.35px;transform:translateX(-50%) scaleX(1.2)">40000</div>
<div class="tick" style="left:407.1px;top:705px;letter-spacing:0.35px;transform:translateX(-50%) scaleX(1.2)">45000</div>
<div class="tick" style="left:501.2px;top:705px;letter-spacing:0.35px;transform:translateX(-50%) scaleX(1.2)">50000</div>
<div class="tick" style="left:595.3px;top:705px;letter-spacing:0.35px;transform:translateX(-50%) scaleX(1.2)">55000</div>
<div class="tick" style="left:689.4px;top:705px;letter-spacing:0.35px;transform:translateX(-50%) scaleX(1.2)">60000</div>
<div class="tick" style="left:783.4px;top:705px;letter-spacing:0.35px;transform:translateX(-50%) scaleX(1.2)">65000</div>
<div class="tick ty" style="left:128.3px;top:693.4px;letter-spacing:0.3px;transform-origin:100% 50%;transform:scaleX(1.2)">0</div>
<div class="tick ty" style="left:128.3px;top:647.4px;letter-spacing:0.3px;transform-origin:100% 50%;transform:scaleX(1.2)">2</div>
<div class="tick ty" style="left:128.3px;top:601.4px;letter-spacing:0.3px;transform-origin:100% 50%;transform:scaleX(1.2)">4</div>
<div class="tick ty" style="left:128.3px;top:555.4px;letter-spacing:0.3px;transform-origin:100% 50%;transform:scaleX(1.2)">6</div>
<div class="tick ty" style="left:128.3px;top:509.4px;letter-spacing:0.3px;transform-origin:100% 50%;transform:scaleX(1.2)">8</div>
<div class="tick ty" style="left:128.3px;top:463.4px;letter-spacing:0.3px;transform-origin:100% 50%;transform:scaleX(1.2)">10</div>
<div class="tick" style="left:708.5px;top:478px;color:#808080;letter-spacing:0.45px;font-size:12.3px;transform-origin:0 50%;transform:scaleX(1.14)">aida02 1.8.H</div>
<div class="tick" style="left:1154.9px;top:705px;letter-spacing:0.35px;transform:translateX(-50%) scaleX(1.2)">35000</div>
<div class="tick" style="left:1249.0px;top:705px;letter-spacing:0.35px;transform:translateX(-50%) scaleX(1.2)">40000</div>
<div class="tick" style="left:1343.1px;top:705px;letter-spacing:0.35px;transform:translateX(-50%) scaleX(1.2)">45000</div>
<div class="tick" style="left:1437.2px;top:705px;letter-spacing:0.35px;transform:translateX(-50%) scaleX(1.2)">50000</div>
<div class="tick" style="left:1531.3px;top:705px;letter-spacing:0.35px;transform:translateX(-50%) scaleX(1.2)">55000</div>
<div class="tick" style="left:1625.4px;top:705px;letter-spacing:0.35px;transform:translateX(-50%) scaleX(1.2)">60000</div>
<div class="tick" style="left:1719.4px;top:705px;letter-spacing:0.35px;transform:translateX(-50%) scaleX(1.2)">65000</div>
<div class="tick ty" style="left:1064.3px;top:693.4px;letter-spacing:0.3px;transform-origin:100% 50%;transform:scaleX(1.2)">0</div>
<div class="tick ty" style="left:1064.3px;top:647.4px;letter-spacing:0.3px;transform-origin:100% 50%;transform:scaleX(1.2)">2</div>
<div class="tick ty" style="left:1064.3px;top:601.4px;letter-spacing:0.3px;transform-origin:100% 50%;transform:scaleX(1.2)">4</div>
<div class="tick ty" style="left:1064.3px;top:555.4px;letter-spacing:0.3px;transform-origin:100% 50%;transform:scaleX(1.2)">6</div>
<div class="tick ty" style="left:1064.3px;top:509.4px;letter-spacing:0.3px;transform-origin:100% 50%;transform:scaleX(1.2)">8</div>
<div class="tick ty" style="left:1064.3px;top:463.4px;letter-spacing:0.3px;transform-origin:100% 50%;transform:scaleX(1.2)">10</div>
<div class="tick" style="left:1644.5px;top:478px;color:#808080;letter-spacing:0.45px;font-size:12.3px;transform-origin:0 50%;transform:scaleX(1.14)">aida04 1.8.H</div>
<div class="tick" style="left:218.9px;top:976px;letter-spacing:0.35px;transform:translateX(-50%) scaleX(1.2)">35000</div>
<div class="tick" style="left:313.0px;top:976px;letter-spacing:0.35px;transform:translateX(-50%) scaleX(1.2)">40000</div>
<div class="tick" style="left:407.1px;top:976px;letter-spacing:0.35px;transform:translateX(-50%) scaleX(1.2)">45000</div>
<div class="tick" style="left:501.2px;top:976px;letter-spacing:0.35px;transform:translateX(-50%) scaleX(1.2)">50000</div>
<div class="tick" style="left:595.3px;top:976px;letter-spacing:0.35px;transform:translateX(-50%) scaleX(1.2)">55000</div>
<div class="tick" style="left:689.4px;top:976px;letter-spacing:0.35px;transform:translateX(-50%) scaleX(1.2)">60000</div>
<div class="tick" style="left:783.4px;top:976px;letter-spacing:0.35px;transform:translateX(-50%) scaleX(1.2)">65000</div>
<div class="tick ty" style="left:128.3px;top:964.4px;letter-spacing:0.3px;transform-origin:100% 50%;transform:scaleX(1.2)">0</div>
<div class="tick ty" style="left:128.3px;top:918.4px;letter-spacing:0.3px;transform-origin:100% 50%;transform:scaleX(1.2)">2</div>
<div class="tick ty" style="left:128.3px;top:872.4px;letter-spacing:0.3px;transform-origin:100% 50%;transform:scaleX(1.2)">4</div>
<div class="tick ty" style="left:128.3px;top:826.4px;letter-spacing:0.3px;transform-origin:100% 50%;transform:scaleX(1.2)">6</div>
<div class="tick ty" style="left:128.3px;top:780.4px;letter-spacing:0.3px;transform-origin:100% 50%;transform:scaleX(1.2)">8</div>
<div class="tick ty" style="left:128.3px;top:734.4px;letter-spacing:0.3px;transform-origin:100% 50%;transform:scaleX(1.2)">10</div>
<div class="tick" style="left:708.5px;top:749px;color:#808080;letter-spacing:0.45px;font-size:12.3px;transform-origin:0 50%;transform:scaleX(1.14)">aida06 1.8.H</div>
<div class="tick" style="left:1154.9px;top:976px;letter-spacing:0.35px;transform:translateX(-50%) scaleX(1.2)">35000</div>
<div class="tick" style="left:1249.0px;top:976px;letter-spacing:0.35px;transform:translateX(-50%) scaleX(1.2)">40000</div>
<div class="tick" style="left:1343.1px;top:976px;letter-spacing:0.35px;transform:translateX(-50%) scaleX(1.2)">45000</div>
<div class="tick" style="left:1437.2px;top:976px;letter-spacing:0.35px;transform:translateX(-50%) scaleX(1.2)">50000</div>
<div class="tick" style="left:1531.3px;top:976px;letter-spacing:0.35px;transform:translateX(-50%) scaleX(1.2)">55000</div>
<div class="tick" style="left:1625.4px;top:976px;letter-spacing:0.35px;transform:translateX(-50%) scaleX(1.2)">60000</div>
<div class="tick" style="left:1719.4px;top:976px;letter-spacing:0.35px;transform:translateX(-50%) scaleX(1.2)">65000</div>
<div class="tick ty" style="left:1064.3px;top:964.4px;letter-spacing:0.3px;transform-origin:100% 50%;transform:scaleX(1.2)">0</div>
<div class="tick ty" style="left:1064.3px;top:918.4px;letter-spacing:0.3px;transform-origin:100% 50%;transform:scaleX(1.2)">2</div>
<div class="tick ty" style="left:1064.3px;top:872.4px;letter-spacing:0.3px;transform-origin:100% 50%;transform:scaleX(1.2)">4</div>
<div class="tick ty" style="left:1064.3px;top:826.4px;letter-spacing:0.3px;transform-origin:100% 50%;transform:scaleX(1.2)">6</div>
<div class="tick ty" style="left:1064.3px;top:780.4px;letter-spacing:0.3px;transform-origin:100% 50%;transform:scaleX(1.2)">8</div>
<div class="tick ty" style="left:1064.3px;top:734.4px;letter-spacing:0.3px;transform-origin:100% 50%;transform:scaleX(1.2)">10</div>
<div class="tick" style="left:1644.5px;top:749px;color:#111;letter-spacing:0.45px;font-size:12.3px;transform-origin:0 50%;transform:scaleX(1.14)">aida08 1.8.H</div>
<svg class="abs" style="left:0;top:366px" width="600" height="40" viewBox="0 366 600 40">
<defs>
 <radialGradient id="gY" cx="0.5" cy="0.45" r="0.6"><stop offset="0" stop-color="#ffe23a"/><stop offset="0.7" stop-color="#f7c400"/><stop offset="1" stop-color="#c98f00"/></radialGradient>
 <linearGradient id="gGloss" x1="0" y1="0" x2="0" y2="1"><stop offset="0" stop-color="#fff" stop-opacity="0.55"/><stop offset="1" stop-color="#fff" stop-opacity="0"/></linearGradient>
 <linearGradient id="gBlue" x1="0" y1="0" x2="0" y2="1"><stop offset="0" stop-color="#9dd0f5"/><stop offset="0.45" stop-color="#3b97e3"/><stop offset="1" stop-color="#0a6ad6"/></linearGradient>
 <radialGradient id="gLens" cx="0.45" cy="0.4" r="0.6"><stop offset="0" stop-color="#ffffff"/><stop offset="0.75" stop-color="#ececec"/><stop offset="1" stop-color="#d8d8d8"/></radialGradient>
 <linearGradient id="gPlus" x1="0" y1="0" x2="0" y2="1"><stop offset="0" stop-color="#b7d936"/><stop offset="1" stop-color="#7fb414"/></linearGradient>
 <linearGradient id="gMinus" x1="0" y1="0" x2="0" y2="1"><stop offset="0" stop-color="#f58a8a"/><stop offset="0.5" stop-color="#e64545"/><stop offset="1" stop-color="#d02a2a"/></linearGradient>
 <radialGradient id="gBall" cx="0.55" cy="0.45" r="0.6"><stop offset="0" stop-color="#0fb2f2"/><stop offset="0.7" stop-color="#0e9be9"/><stop offset="1" stop-color="#0a72d2"/></radialGradient>
 <linearGradient id="gGL" x1="0" y1="0" x2="1" y2="0"><stop offset="0" stop-color="#6fae0c"/><stop offset="0.45" stop-color="#98c814"/><stop offset="1" stop-color="#e2ec80"/></linearGradient>
 <linearGradient id="gGR" x1="0" y1="0" x2="0" y2="1"><stop offset="0" stop-color="#d2e684"/><stop offset="0.45" stop-color="#b4d64e"/><stop offset="0.5" stop-color="#8cc21c"/><stop offset="1" stop-color="#74b20c"/></linearGradient>
 <linearGradient id="gGU" x1="0" y1="0" x2="0" y2="1"><stop offset="0" stop-color="#cfe46a"/><stop offset="0.5" stop-color="#a8d03c"/><stop offset="0.52" stop-color="#7cba12"/><stop offset="1" stop-color="#5ea606"/></linearGradient>
 <linearGradient id="gGD" x1="0" y1="0" x2="1" y2="0"><stop offset="0" stop-color="#e0ee9a"/><stop offset="0.45" stop-color="#b6d84a"/><stop offset="0.55" stop-color="#84be12"/><stop offset="1" stop-color="#6cae0a"/></linearGradient>
 <radialGradient id="gSh" cx="0.5" cy="0.5" r="0.5"><stop offset="0" stop-color="#5a4a30" stop-opacity="0.55"/><stop offset="1" stop-color="#5a4a30" stop-opacity="0"/></radialGradient>
</defs>
<!-- radiation -->
<ellipse cx="21.500" cy="398.300" rx="9.500" ry="1.800" fill="url(#gSh)"/>
<circle cx="21.550" cy="387.200" r="11.600" fill="url(#gY)"/>
<g fill="#141414">
 <path d="M21.550 387.200 L9.950 387.200 A11.600 11.600 0 0 1 15.750 377.150 Z"/>
 <path d="M21.550 387.200 L27.350 377.150 A11.600 11.600 0 0 1 33.150 387.200 Z"/>
 <path d="M21.550 387.200 L27.350 397.250 A11.600 11.600 0 0 1 15.750 397.250 Z"/>
</g>
<path d="M10.300 386.400 A11.300 11.300 0 0 1 32.800 386.400 Q21.500 383.500 10.300 386.400 Z" fill="url(#gGloss)" opacity="0.5"/>
<circle cx="21.550" cy="387.200" r="11.300" fill="none" stroke="#f3b800" stroke-opacity="0.55" stroke-width="0.700"/>
<!-- refresh -->
<ellipse cx="77" cy="398.300" rx="10.500" ry="1.600" fill="url(#gSh)"/>
<g fill="url(#gBlue)" stroke="#1c6fd0" stroke-width="0.700" stroke-linejoin="round">
 <path d="M74.500 375.800 L76.300 375.800 L75.200 384 L72.300 381.300 C69.500 383.800 69 389.500 73.800 394.300 L71.300 397.300 C64 392 63.500 382.500 69.300 378.300 L67.300 375.800 Z"/>
 <path d="M79.300 378.300 L81.500 375.900 C88.800 379.500 91.300 389.300 85.300 394.300 L87.300 397.300 L78 397.600 L79.400 389.300 L82.200 391.600 C85.300 388.300 84.500 382.500 79.300 378.300 Z"/>
</g>
<!-- zoom in -->
<ellipse cx="160" cy="398.200" rx="9" ry="1.500" fill="url(#gSh)"/>
<path d="M162.600 388.600 L171.600 396.600" stroke="#111" stroke-width="3.800" stroke-linecap="round"/>
<path d="M163.300 388.200 L171.300 395.300" stroke="#f4f4f4" stroke-width="1" stroke-linecap="round"/>
<circle cx="156.500" cy="382.100" r="7.300" fill="url(#gLens)" stroke="#b4b4b4" stroke-width="1.900"/>
<circle cx="156.500" cy="382.100" r="8.300" fill="none" stroke="#d0d0d0" stroke-width="0.600"/>
<path d="M165.700 372.900 H169.900 V377.100 H174.200 V381.300 H169.900 V385.600 H165.700 V381.300 H161.500 V377.100 H165.700 Z" fill="url(#gPlus)" stroke="#5f9a0c" stroke-width="0.800" stroke-linejoin="round"/>
<path d="M167.800 374 V384.500 M162.600 379.200 H173.100" stroke="#d6e640" stroke-width="1" opacity="0.800"/>
<!-- zoom out -->
<ellipse cx="216" cy="398.200" rx="9" ry="1.500" fill="url(#gSh)"/>
<path d="M218.800 388.600 L227.800 396.600" stroke="#111" stroke-width="3.800" stroke-linecap="round"/>
<path d="M219.500 388.200 L227.500 395.300" stroke="#f4f4f4" stroke-width="1" stroke-linecap="round"/>
<circle cx="212.700" cy="382.100" r="7.300" fill="url(#gLens)" stroke="#b4b4b4" stroke-width="1.900"/>
<circle cx="212.700" cy="382.100" r="8.300" fill="none" stroke="#d0d0d0" stroke-width="0.600"/>
<rect x="217.700" y="377.200" width="12.400" height="3.700" rx="0.800" fill="url(#gMinus)" stroke="#c01818" stroke-width="0.700"/>
<!-- blue down -->
<ellipse cx="261.800" cy="386.500" rx="1.600" ry="10.500" fill="url(#gSh)" opacity="0.8"/>
<circle cx="273.200" cy="386.400" r="11.400" fill="url(#gBall)"/>
<circle cx="273.200" cy="386.400" r="10.300" fill="none" stroke="#7fd0fa" stroke-width="0.700" opacity="0.800"/>
<circle cx="273.200" cy="386.400" r="11.100" fill="none" stroke="#0a66c8" stroke-width="0.700"/>
<path d="M269.400 380.100 H276.200 L272.800 387.300 Z M269.400 386.300 H276.200 L272.800 393.400 Z" fill="#3a3a3a"/>
<!-- blue up -->
<ellipse cx="342.800" cy="386.500" rx="1.600" ry="10.500" fill="url(#gSh)" opacity="0.8"/>
<circle cx="331.400" cy="386.400" r="11.400" fill="url(#gBall)"/>
<circle cx="331.400" cy="386.400" r="10.300" fill="none" stroke="#7fd0fa" stroke-width="0.700" opacity="0.800"/>
<circle cx="331.400" cy="386.400" r="11.100" fill="none" stroke="#0a66c8" stroke-width="0.700"/>
<path d="M331.700 379.800 L335.200 386.300 H328.200 Z M331.700 386.200 L335.200 392.800 H328.200 Z" fill="#3a3a3a"/>
<!-- left arrow -->
<ellipse cx="374.500" cy="387" rx="1.600" ry="10.500" fill="url(#gSh)" opacity="0.9"/>
<path d="M375.400 386.800 L385.200 377.300 V381.400 H397.800 V392.500 H385.200 V396.600 Z" fill="url(#gGL)" stroke="#579a0a" stroke-width="0.900" stroke-linejoin="round"/>
<!-- right arrow -->
<ellipse cx="444" cy="396" rx="12" ry="1.300" fill="url(#gSh)"/>
<path d="M456.700 385.400 L443 375.500 V380.300 H429.400 V390.500 H443 V395.300 Z" fill="url(#gGR)" stroke="#579a0a" stroke-width="0.900" stroke-linejoin="round"/>
<!-- up arrow -->
<ellipse cx="499.500" cy="398.400" rx="9.500" ry="1.500" fill="url(#gSh)"/>
<path d="M499.400 374.800 L508.800 385.500 H504.800 V398 H494.100 V385.500 H490 Z" fill="url(#gGU)" stroke="#579a0a" stroke-width="0.900" stroke-linejoin="round"/>
<!-- down arrow -->
<ellipse cx="564.800" cy="386" rx="1.600" ry="12.500" fill="url(#gSh)" opacity="0.9"/>
<path d="M554.500 400.600 L544.400 386.600 H549.100 V373.200 H559.600 V386.600 H564.400 Z" fill="url(#gGD)" stroke="#579a0a" stroke-width="0.900" stroke-linejoin="round"/>
</svg>
<!-- logos -->
<svg class="abs" style="left:1782px;top:161px" width="104" height="60" viewBox="0 0 104 60">
 <rect x="0" y="0" width="58" height="58" fill="#f8c400"/>
 <circle cx="8.200" cy="6.300" r="5.400" fill="#0b2a66"/>
 <path d="M5 8.800 L8.200 3.800 L11.400 8.800 Z" fill="#e4ecf7"/>
 <path d="M44 1 H52.300 V6 Q52.300 9.500 48.150 11 Q44 9.500 44 6 Z" fill="#1f3fa8"/>
 <path d="M46.200 3.300 H50.100 M46.600 5.600 H49.700 M47.200 7.800 H49.100" stroke="#e4ecf7" stroke-width="0.900"/>
 <text x="3.200" y="32.700" font-family="Liberation Serif" font-weight="bold" font-size="29.600" fill="#0c0a00" textLength="24.300" lengthAdjust="spacingAndGlyphs">M</text>
 <text x="27.600" y="29.700" font-family="Liberation Sans" font-weight="bold" font-size="12.800" fill="#0c0a00" textLength="28.400" lengthAdjust="spacingAndGlyphs">idas</text>
 <text x="4" y="42.300" font-family="Liberation Sans" font-weight="bold" font-size="3.400" fill="#1a1400" textLength="18" lengthAdjust="spacingAndGlyphs">powered by</text>
 <rect x="29.900" y="35.900" width="12.900" height="19.100" fill="#d63a12"/>
 <path d="M37 38.500 C39.200 39.700 38.500 44.700 36.200 50 C34.600 46 34.700 41.700 37 38.500 Z" fill="#2358c4"/>
 <path d="M33.500 38 C33 39.500 33.200 40.500 33.600 41.700 M40 40.500 C40 41.500 39.700 42 39.400 42.700" stroke="#f4b000" stroke-width="0.500" fill="none"/>
 <rect x="31.400" y="51.300" width="8.800" height="1.400" fill="#f3a488"/>
 <!-- TCL -->
 <path d="M63.500 49 L65.500 33 L66 49 L95.500 49.500 L94.300 57.300 L63 55.200 Z" fill="#1d50b8"/>
 <path d="M97.300 11 L99.800 10.600 L98.200 30 L96.800 30 Z" fill="#1d50b8"/>
 <path d="M66 1.200 L98.200 2 L97 48.600 L65.200 49 Z" fill="#d63a00"/>
 <path d="M86 5.300 C81 7 77 13 77 22 C77 30 79.500 38 81.900 46.500 C82.600 40 83.300 33 85 26 C86.500 19 89 11.500 86 5.300 Z" fill="#2358c4"/>
 <path d="M82.700 45 C82 37 82.500 28 85.300 16.500" stroke="#d4e2ff" stroke-width="0.700" fill="none"/>
 <path d="M78.500 26 C78.500 31 79.500 36 81 40" stroke="#9db8f0" stroke-width="0.700" fill="none"/>
 <path d="M73.200 2.500 C71.500 6 72 9.500 73.700 13.200 M76.800 2.300 C75.300 5.300 75.300 7.600 76.200 10.200 M90.800 10.800 C90.700 13.700 89.800 15.600 88.800 17.600 M94.200 11.200 C94.200 12.700 93.800 13.700 93.200 14.800" stroke="#f4b000" stroke-width="1" fill="none"/>
 <text x="67.200" y="46" font-family="Liberation Sans" font-weight="bold" font-size="6.200" fill="#fbeee0" textLength="12.800" lengthAdjust="spacingAndGlyphs">TCL</text>
 <text x="68.200" y="54.700" font-family="Liberation Sans" font-weight="bold" font-size="6.600" fill="#f4e000" textLength="24.800" lengthAdjust="spacingAndGlyphs">POWERED</text>
</svg>
</div></body></html>
